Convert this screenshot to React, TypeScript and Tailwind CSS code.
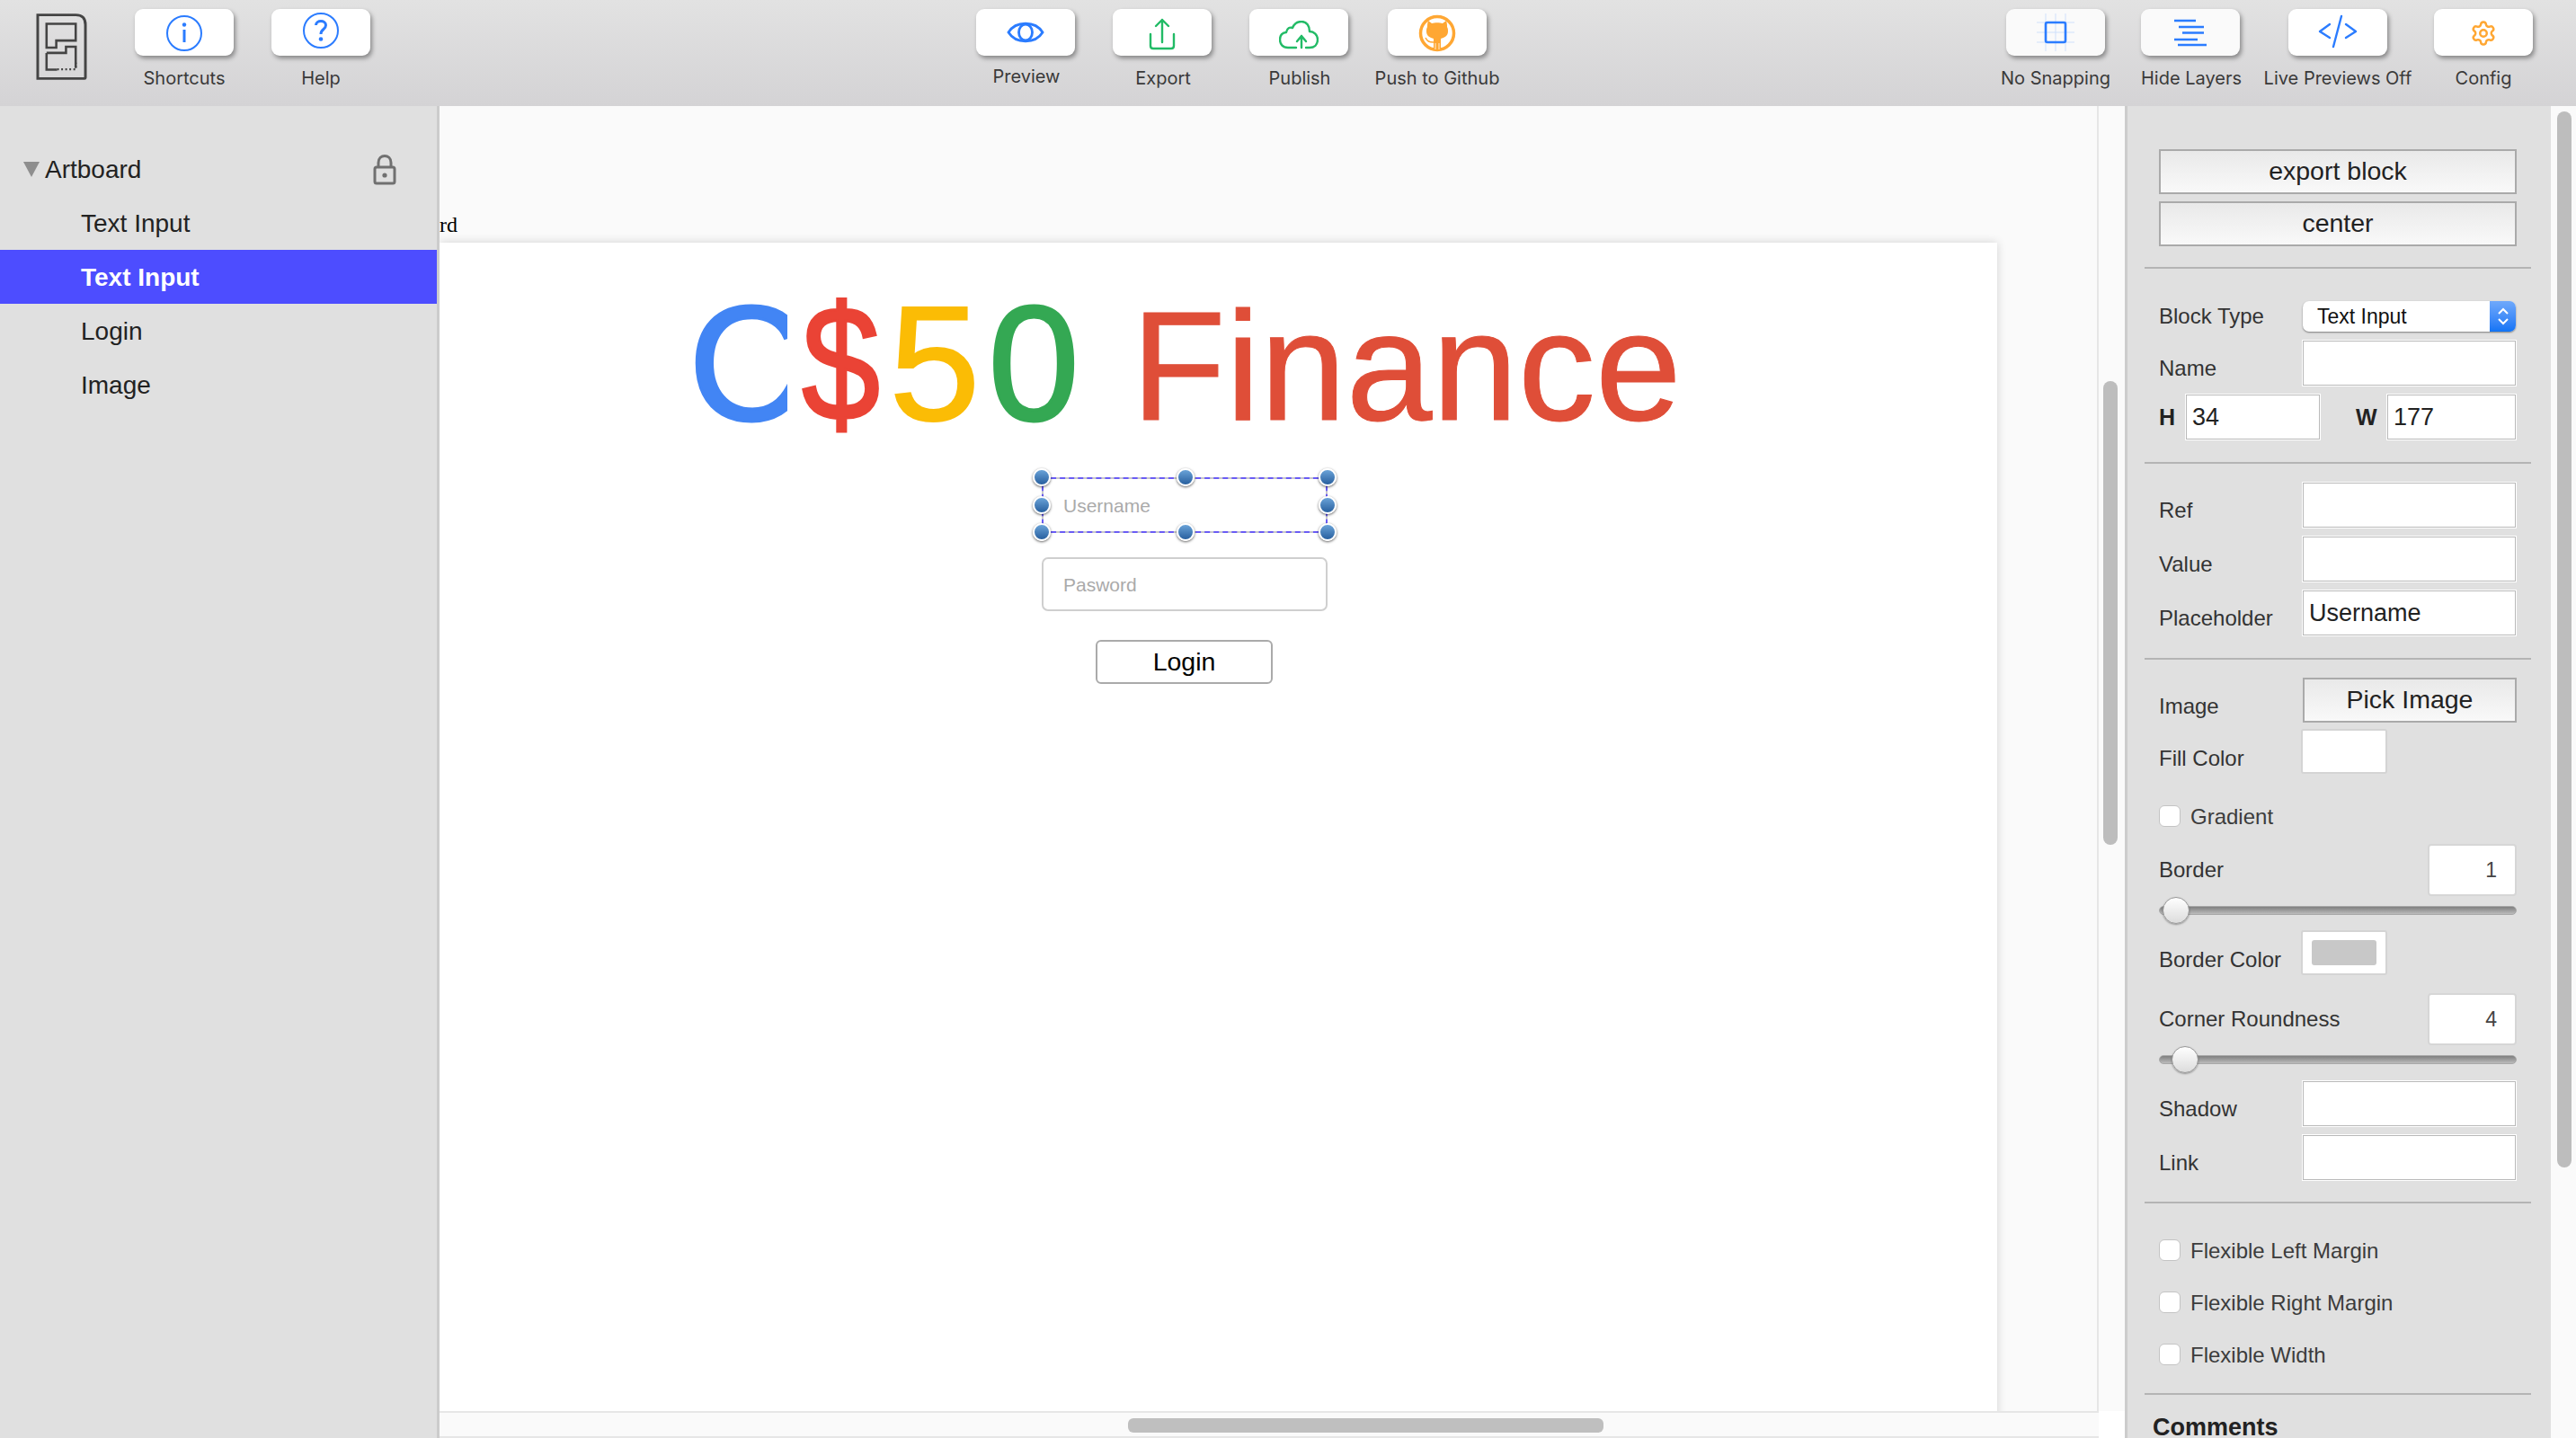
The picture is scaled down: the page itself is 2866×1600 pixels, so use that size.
import React from "react";
import { Settings } from "lucide-react";

const blue = "#2b7cff";
const green = "#22bb66";
const orange = "#ffa733";

function ToolItem({ label, children, className = "", bg = "bg-white", labelClass = "mt-[13px]" }: { label: string; children: React.ReactNode; className?: string; bg?: string; labelClass?: string }) {
  return (
    <div className={`flex flex-col items-center w-[110px] shrink-0 ${className}`}>
      <div className={`w-[110px] h-[52px] rounded-[9px] flex items-center justify-center ${bg} shadow-[2px_3px_5px_rgba(0,0,0,0.38)]`}>{children}</div>
      <div className={`whitespace-nowrap text-[20px] leading-[24px] text-[#3a3a3a] font-['Inter',sans-serif] ${labelClass}`}>{label}</div>
    </div>
  );
}

function AppLogo() {
  return (
    <svg width="57" height="76" viewBox="0 0 58 76" fill="none" stroke="#444" className="shrink-0">
      <path d="M2 2 H45 Q56 2 56 13 V73 Q56 74 55 74 H2 Z" strokeWidth="3" />
      <path d="M12 12 H45 V31 H23 V39 H12 Z" strokeWidth="2.6" />
      <path d="M12 45 H34 V38 H45 V62 M12 45 V64 H24" strokeWidth="2.6" />
      <path d="M24 63.5 H46 M45 62 V56" strokeWidth="2.4" strokeDasharray="2 2.6" />
    </svg>
  );
}

function Toolbar() {
  return (
    <div className="h-[118px] shrink-0 flex items-start pt-[10px] pl-[40px] bg-gradient-to-b from-[#e2e2e2] to-[#d4d3d5]">
      <div className="mt-[4px] mr-[53px]"><AppLogo /></div>
      <ToolItem label="Shortcuts">
        <svg width="42" height="42" viewBox="0 0 42 42" fill="none" stroke={blue} strokeWidth="2" className="mt-[2px]">
          <circle cx="21" cy="21" r="19" />
          <path d="M21 17 V31" strokeWidth="3" />
          <circle cx="21" cy="11.5" r="2.2" fill={blue} stroke="none" />
        </svg>
      </ToolItem>
      <ToolItem label="Help" className="ml-[42px]">
        <svg width="42" height="42" viewBox="0 0 42 42" fill="none" stroke={blue} strokeWidth="2" className="-mt-[4px]">
          <circle cx="21" cy="21" r="19" />
          <path d="M15.5 15 C15.5 9 26.5 9 26.5 15 C26.5 20 21 19 21 25" strokeWidth="3" />
          <circle cx="21" cy="30.5" r="2.3" fill={blue} stroke="none" />
        </svg>
      </ToolItem>
      <ToolItem label="Preview" className="ml-[674px]" labelClass="mt-[11px] ml-[2px]">
        <svg width="42" height="24" viewBox="0 0 42 24" fill="none" stroke={blue} strokeWidth="2.8">
          <path d="M2 12 C10 -1 32 -1 40 12 C32 25 10 25 2 12 Z" />
          <ellipse cx="21" cy="12" rx="7.5" ry="9" />
        </svg>
      </ToolItem>
      <ToolItem label="Export" className="ml-[42px]" labelClass="mt-[13px] ml-[2px]">
        <svg width="30" height="36" viewBox="0 0 30 36" fill="none" stroke={green} strokeWidth="2.4" strokeLinecap="round" strokeLinejoin="round" className="mt-[4px]">
          <path d="M8 9 L15 2 L22 9 M15 2 V27" />
          <path d="M2 18 V31 Q2 34 5 34 H25 Q28 34 28 31 V18" />
        </svg>
      </ToolItem>
      <ToolItem label="Publish" className="ml-[42px]" labelClass="mt-[13px] ml-[2px]">
        <svg width="44" height="32" viewBox="0 0 44 32" fill="none" stroke={green} strokeWidth="2.4" strokeLinecap="round" strokeLinejoin="round" className="mt-[5px]">
          <path d="M19 30 H10 C4 30 1 26 1 21 C1 16 4 13 8 13 C9 8 12 7 15 8 C17 3 21 1 25 1 C31 1 34 6 34 12 C39 12 43 16 43 21 C43 27 39 30 34 30 H30" />
          <path d="M20 23 L25 17 L30 23 M25 17 V30" />
        </svg>
      </ToolItem>
      <ToolItem label="Push to Github" className="ml-[44px]">
        <svg width="42" height="42" viewBox="0 0 42 42" className="mt-[2px]">
          <ellipse cx="21" cy="21" rx="18.5" ry="18.5" fill="#fff" stroke={orange} strokeWidth="3.5" />
          <path d="M11 7 L15 10 C18 9 24 9 27 10 L31 7 C32 10 32 12 32 14 C33 16 33 17 33 19 C33 24 29 26 25 27 V39 H17 V27 C13 26 9 24 9 19 C9 17 9 16 10 14 C10 12 10 10 11 7 Z" fill={orange} />
          <path d="M8 26 C10 30 12 31 17 31" fill="none" stroke={orange} strokeWidth="1.5" />
          <path d="M19 32 V39 M23 32 V39" stroke="#fff" strokeWidth="0.8" />
        </svg>
      </ToolItem>
      <ToolItem label="No Snapping" className="ml-[578px]" bg="bg-[#fafafa]">
        <svg width="44" height="44" viewBox="0 0 44 44" fill="none" className="-mt-[1px]">
          <path d="M11 1 V43 M22 1 V43 M33 1 V43 M1 11 H43 M1 22 H43 M1 33 H43" stroke="#cfe0fb" strokeWidth="1" />
          <rect x="11" y="11" width="22" height="22" rx="2" stroke={blue} strokeWidth="2.6" />
        </svg>
      </ToolItem>
      <ToolItem label="Hide Layers" className="ml-[40px]" bg="bg-[#fafafa]" labelClass="mt-[13px] ml-[2px]">
        <svg width="38" height="34" viewBox="0 0 38 34" fill="none" stroke={blue} strokeWidth="2.6" className="mt-[1px]">
          <path d="M1 3 H25 M6 10 H34 M10 16.5 H34 M1 24 H27 M5 30 H37" />
        </svg>
      </ToolItem>
      <ToolItem label="Live Previews Off" className="ml-[54px]">
        <svg width="44" height="38" viewBox="0 0 44 38" fill="none" stroke={blue} strokeWidth="2.4" strokeLinecap="round" strokeLinejoin="round" className="-mt-[2px]">
          <path d="M13 11 L2 19 L13 26 M31 11 L42 19 L31 26 M26 2 L17 36" />
        </svg>
      </ToolItem>
      <ToolItem label="Config" className="ml-[52px]">
        <Settings size={30} color={orange} strokeWidth={2} className="mt-[2px]" />
      </ToolItem>
    </div>
  );
}

function Sidebar() {
  const rows = [
    { t: "Text Input", on: false },
    { t: "Text Input", on: true },
    { t: "Login", on: false },
    { t: "Image", on: false },
  ];
  return (
    <div className="w-[489px] shrink-0 bg-[#e0e0e0] border-r-[3px] border-[#cccccc] pt-[40px] text-[28px] text-[#222]">
      <div className="h-[60px] flex items-center pl-[26px] pr-[45px]">
        <div className="w-0 h-0 border-l-[9px] border-r-[9px] border-t-[17px] border-l-transparent border-r-transparent border-t-[#8e8e8e] mr-[6px]" />
        <span className="flex-1 pt-[2px]">Artboard</span>
        <svg width="26" height="34" viewBox="0 0 26 34" fill="none" stroke="#707070" strokeWidth="3" className="mt-[2px]">
          <rect x="2" y="14" width="22" height="18" rx="2" />
          <path d="M6 14 V9 C6 -1 20 -1 20 9 V14" />
          <circle cx="13" cy="23" r="2.6" fill="#707070" stroke="none" />
        </svg>
      </div>
      {rows.map((r, i) => (
        <div key={i} className={`h-[60px] flex items-center pl-[90px] pt-[1px] ${r.on ? "bg-[#4d4dff] text-white font-bold" : ""}`}>
          {r.t}
        </div>
      ))}
    </div>
  );
}

function Handle({ x, y }: { x: number; y: number }) {
  return (
    <div
      className="absolute w-[20px] h-[20px] rounded-full border-2 border-white bg-gradient-to-b from-[#6aa3d8] to-[#28609f] shadow-[0_1px_3px_rgba(0,0,0,0.65)]"
      style={{ left: x - 10, top: y - 10 }}
    />
  );
}

function Artboard() {
  const xs = [670, 830, 988];
  const ys = [261, 292, 322];
  return (
    <div className="absolute left-0 top-[152px] w-[1733px] h-[1400px] bg-white shadow-[0_0_10px_rgba(0,0,0,0.16)]">
      <div className="absolute left-[277px] top-[43px] flex items-baseline whitespace-nowrap leading-none">
        <span className="inline-block w-[124px] text-[182px] text-[#4285f4] [-webkit-text-stroke:3px_#4285f4] [clip-path:inset(-50px_14px_-50px_0)]">C</span>
        <span className="inline-block -ml-[5px] mr-[3px] scale-x-[0.86] text-[182px] text-[#ea4335] [-webkit-text-stroke:3px_#ea4335]">$</span>
        <span className="text-[182px] text-[#fbbc05] [-webkit-text-stroke:2px_#fbbc05]">5</span>
        <span className="text-[182px] text-[#34a853] ml-[9px] [-webkit-text-stroke:3px_#34a853]">0</span>
        <span className="text-[172px] text-[#df4e38] ml-[58px] [-webkit-text-stroke:1px_#df4e38]">Finance</span>
      </div>

      <div className="absolute left-[670px] top-[261px] w-[318px] h-[62px] border-2 border-[#c9c9c9] rounded-[2px] flex items-center pl-[22px] pt-[2px] text-[21px] text-[#aaa]">Username</div>
      <div className="absolute left-[670px] top-[261px] w-[318px] h-[62px] border-2 border-dashed border-[#6a5cf5]" />
      <div className="absolute left-[670px] top-[350px] w-[318px] h-[60px] border-2 border-[#cfcfcf] rounded-[7px] flex items-center pl-[22px] pt-[2px] text-[21px] text-[#aaa]">Pasword</div>
      <div className="absolute left-[730px] top-[442px] w-[197px] h-[49px] border-2 border-[#aaa] rounded-[6px] flex items-center justify-center text-[28.5px] text-black">Login</div>
      {ys.map((y, j) => xs.map((x, i) => (j === 1 && i === 1 ? null : <Handle key={`${i}-${j}`} x={x} y={y} />)))}
    </div>
  );
}

function Canvas() {
  return (
    <div className="w-[1875px] shrink-0 flex flex-col bg-white">
      <div className="flex h-[1452px]">
        <div className="relative w-[1846px] bg-[#fafafa] border-r-2 border-[#e6e6e6] overflow-hidden">
          <div className="absolute left-0 top-[118px] text-[24px] leading-[28px] text-black whitespace-nowrap font-['Liberation_Serif',serif]">rd</div>
          <Artboard />
        </div>
        <div className="flex-1 bg-[#fafafa] pl-[5px] pt-[306px]">
          <div className="w-[16px] h-[516px] rounded-full bg-[#bdbdbd]" />
        </div>
      </div>
      <div className="w-[1846px] h-[30px] bg-[#fafafa] border-t-2 border-b-2 border-[#e6e6e6] pl-[766px] pt-[6px]">
        <div className="w-[529px] h-[16px] rounded-[6px] bg-[#bfbfbf]" />
      </div>
    </div>
  );
}

function Divider({ className }: { className: string }) {
  return <div className={`h-[2px] bg-[#b4b4b4] -ml-[16px] w-[430px] ${className}`} />;
}

const inputCls = "h-[50px] bg-white border border-[#b9b9b9] ring-1 ring-white text-[27px] text-[#222] px-[6px] outline-none min-w-0";

function Field({ label, value = "", className = "" }: { label: string; value?: string; className?: string }) {
  return (
    <div className={`flex ${className}`}>
      <div className="w-[160px] pt-[16px] text-[24px] leading-[30px] text-[#333]">{label}</div>
      <input readOnly value={value} className={`w-[237px] ${inputCls}`} />
    </div>
  );
}

function GrayButton({ children, className = "" }: { children: React.ReactNode; className?: string }) {
  return (
    <div className={`h-[50px] border-2 border-[#aaa] bg-gradient-to-b from-[#e9e9e9] to-[#f9f9f9] flex items-center justify-center pb-[2px] text-[28.5px] text-[#222] ${className}`}>
      {children}
    </div>
  );
}

function Check({ label, className = "" }: { label: string; className?: string }) {
  return (
    <div className={`flex items-center h-[24px] ${className}`}>
      <div className="w-[24px] h-[24px] rounded-[6px] bg-white border border-[#c4c4c4]" />
      <span className="ml-[11px] pt-[2px] text-[24px] leading-[28px] text-[#3c3c3c]">{label}</span>
    </div>
  );
}

function NumberRow({ label, value, className = "" }: { label: string; value: string; className?: string }) {
  return (
    <div className={`flex items-center justify-between h-[58px] ${className}`}>
      <span className="text-[24px] text-[#333]">{label}</span>
      <div className="w-[99px] h-[58px] bg-white border-2 border-[#d6d6d6] rounded-[4px] flex items-center justify-end pr-[20px] text-[23px] text-[#444]">{value}</div>
    </div>
  );
}

function Slider({ at, className = "" }: { at: number; className?: string }) {
  return (
    <div className={`relative h-[30px] flex items-center ${className}`}>
      <div className="w-full h-[10px] rounded-full bg-gradient-to-b from-[#7f7f7f] to-[#bcbcbc] border border-[#a8a8a8]" />
      <div
        className="absolute top-0 w-[30px] h-[30px] rounded-full border border-[#999] bg-gradient-to-b from-[#ffffff] to-[#dcdcdc] shadow-[0_1px_2px_rgba(0,0,0,0.35)]"
        style={{ left: at }}
      />
    </div>
  );
}

function Swatch({ inner, className = "" }: { inner?: boolean; className?: string }) {
  return (
    <div className={`w-[96px] h-[50px] bg-white border-2 border-[#d4d4d4] rounded-[3px] flex items-center justify-center ${className}`}>
      {inner && <div className="w-[72px] h-[28px] rounded-[3px] bg-[#c8c8c8]" />}
    </div>
  );
}

function Panel() {
  return (
    <div className="w-[474px] shrink-0 bg-[#e0e0e0] border-l-[3px] border-[#cccccc] pl-[35px] pr-[38px] pt-[48px] overflow-hidden">
      <GrayButton>export block</GrayButton>
      <GrayButton className="mt-[8px]">center</GrayButton>
      <Divider className="mt-[23px]" />

      <div className="flex items-center mt-[36px] h-[34px]">
        <div className="w-[160px] text-[24px] text-[#333]">Block Type</div>
        <div className="w-[237px] h-[34px] bg-white rounded-[7px] shadow-[0_1px_2px_rgba(0,0,0,0.45)] flex items-center overflow-hidden">
          <span className="flex-1 pl-[16px] text-[23px] text-[#111]">Text Input</span>
          <div className="w-[29px] h-full bg-gradient-to-b from-[#6fa9fb] to-[#0f74f5] flex items-center justify-center">
            <svg width="14" height="22" viewBox="0 0 14 22" fill="none" stroke="#fff" strokeWidth="2">
              <path d="M2 8 L7 3 L12 8 M2 14 L7 19 L12 14" />
            </svg>
          </div>
        </div>
      </div>
      <Field label="Name" className="mt-[10px]" />
      <div className="flex items-center mt-[10px] h-[50px] font-bold">
        <span className="w-[30px] text-[25px] text-[#222] pt-[2px]">H</span>
        <input readOnly value="34" className={`w-[149px] font-normal ${inputCls}`} />
        <span className="ml-[40px] w-[35px] text-[25px] text-[#222] pt-[2px]">W</span>
        <input readOnly value="177" className={`w-[143px] font-normal ${inputCls}`} />
      </div>
      <Divider className="mt-[25px]" />

      <Field label="Ref" className="mt-[21px]" />
      <Field label="Value" className="mt-[10px]" />
      <Field label="Placeholder" value="Username" className="mt-[10px]" />
      <Divider className="mt-[25px]" />

      <div className="flex mt-[20px]">
        <div className="w-[160px] pt-[17px] text-[24px] leading-[30px] text-[#333]">Image</div>
        <GrayButton className="w-[238px]">Pick Image</GrayButton>
      </div>
      <div className="flex mt-[7px]">
        <div className="w-[158px] pt-[18px] text-[24px] leading-[30px] text-[#333]">Fill Color</div>
        <Swatch />
      </div>
      <Check label="Gradient" className="mt-[35px]" />
      <NumberRow label="Border" value="1" className="mt-[19px]" />
      <Slider at={4} className="mt-[1px]" />
      <div className="flex mt-[7px]">
        <div className="w-[158px] pt-[18px] text-[24px] leading-[30px] text-[#333]">Border Color</div>
        <Swatch inner />
      </div>
      <NumberRow label="Corner Roundness" value="4" className="mt-[20px]" />
      <Slider at={14} className="mt-[1px]" />
      <Field label="Shadow" className="mt-[9px]" />
      <Field label="Link" className="mt-[10px]" />
      <Divider className="mt-[24px]" />

      <Check label="Flexible Left Margin" className="mt-[40px]" />
      <Check label="Flexible Right Margin" className="mt-[34px]" />
      <Check label="Flexible Width" className="mt-[34px]" />
      <Divider className="mt-[31px]" />
      <div className="mt-[26px] -ml-[7px] text-[27px] leading-[20px] font-bold text-[#222]">Comments</div>
    </div>
  );
}

export default function App() {
  return (
    <div className="w-[2866px] h-[1600px] overflow-hidden flex flex-col bg-white font-['Liberation_Sans',sans-serif]">
      <Toolbar />
      <div className="flex h-[1482px]">
        <Sidebar />
        <Canvas />
        <Panel />
        <div className="flex-1 bg-[#fafafa] pl-[7px] pt-[6px]">
          <div className="w-[16px] h-[1175px] rounded-full bg-[#bdbdbd]" />
        </div>
      </div>
    </div>
  );
}
